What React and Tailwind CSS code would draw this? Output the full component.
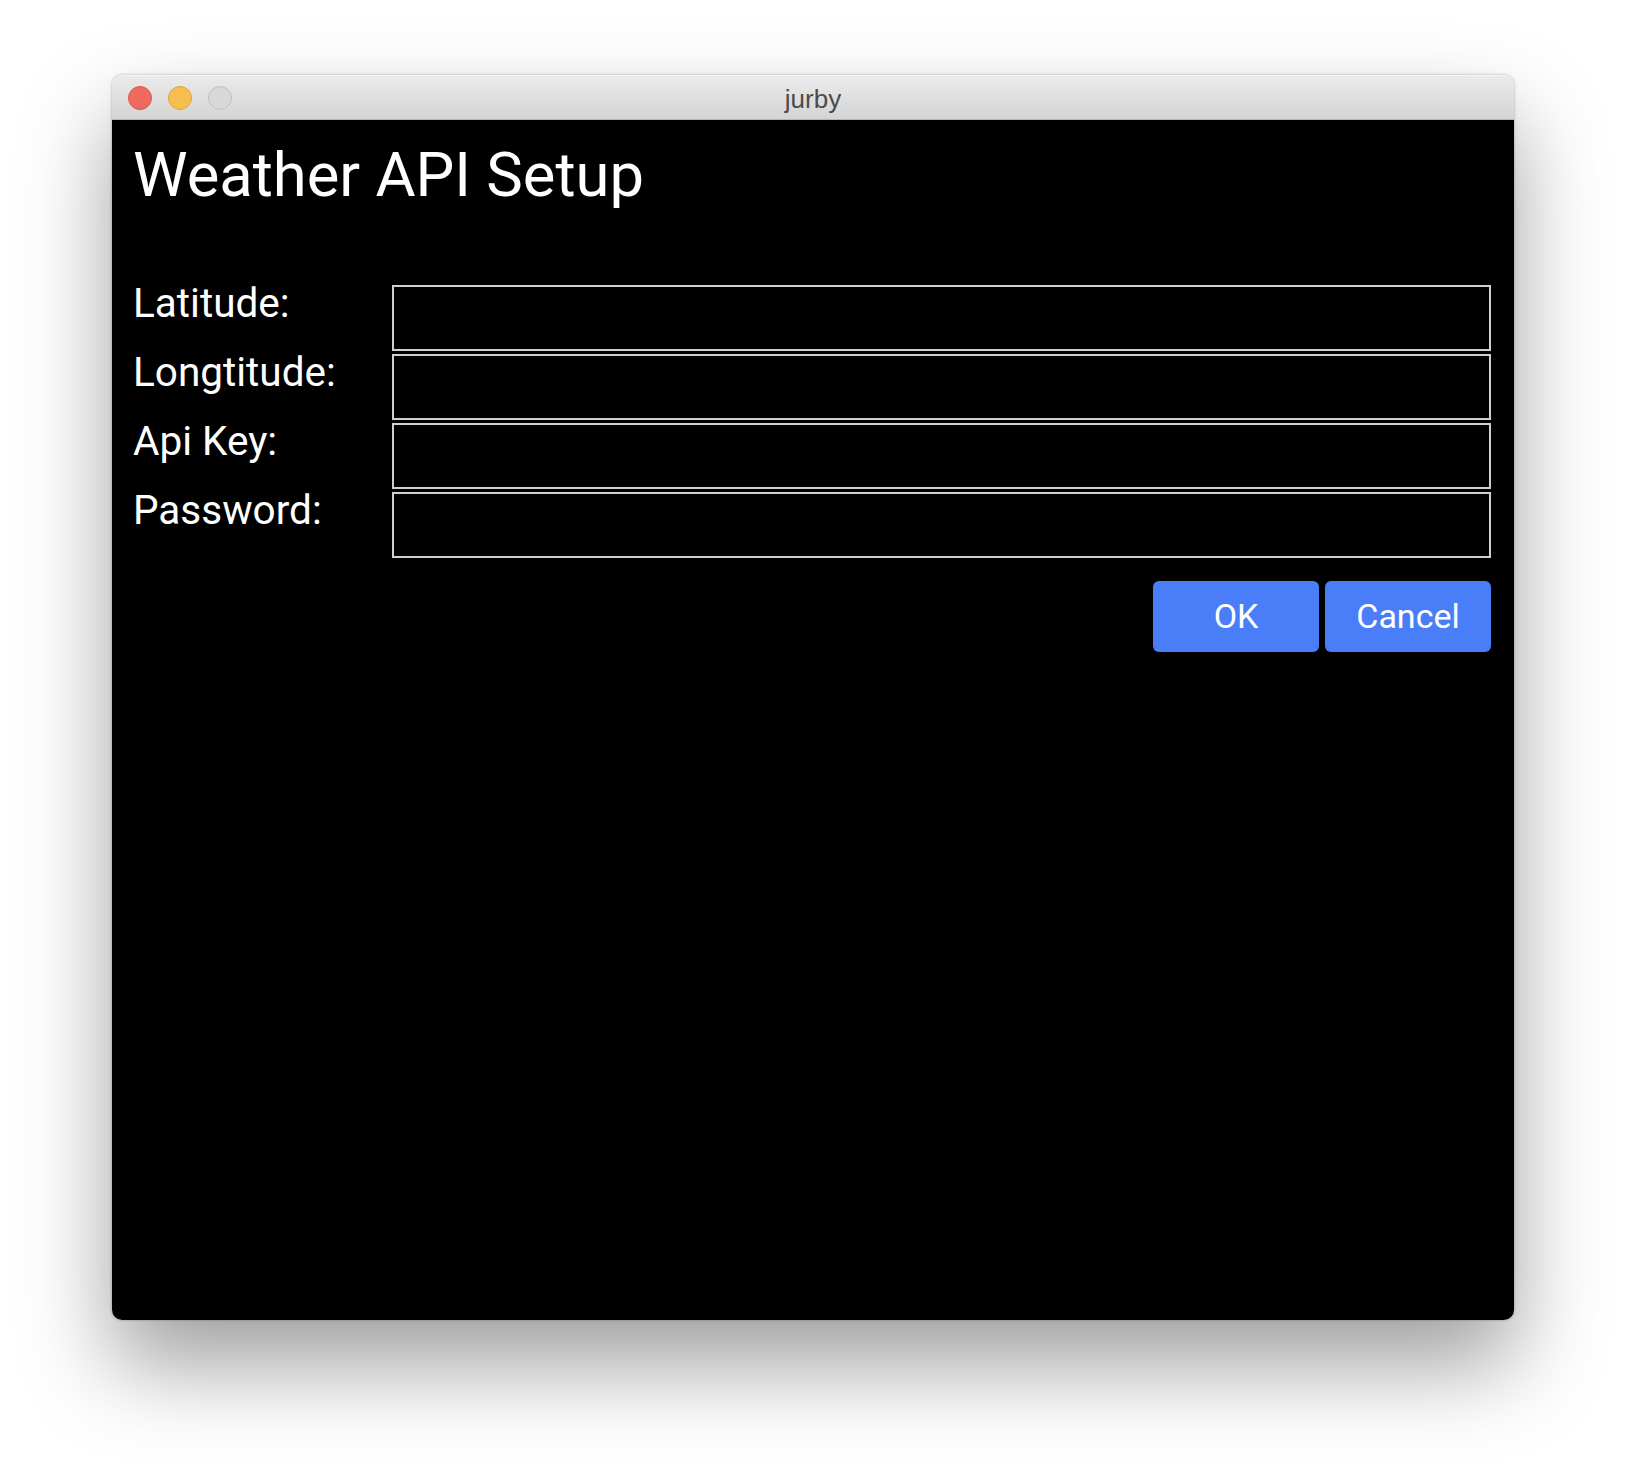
import React from "react";

const fields = ["Latitude:", "Longtitude:", "Api Key:", "Password:"];

function TrafficLights() {
    return (
        <div className="flex items-center gap-[16px] pl-[16px]">
            <span className="w-[24px] h-[24px] rounded-full bg-[#ee6a5f] border border-[#d9574c]" />
            <span className="w-[24px] h-[24px] rounded-full bg-[#f5be4f] border border-[#dca63c]" />
            <span className="w-[24px] h-[24px] rounded-full bg-[#d8d8d8] border border-[#c0c0c0]" />
        </div>
    );
}

export default function App() {
    return (
        <div className="w-full min-h-[1468px] bg-white pt-[75px]" style={{ fontFamily: "Roboto, 'Noto Sans', sans-serif" }}>
            <div className="mx-auto w-[1402px] h-[1245px] flex flex-col rounded-[10px] overflow-hidden shadow-[0_45px_90px_rgba(0,0,0,0.38),0_0_3px_rgba(0,0,0,0.3)]">
                {/* title bar */}
                <div className="relative h-[45px] flex items-center bg-gradient-to-b from-[#ebebeb] to-[#d4d4d4] border-b border-[#b4b4b4] border-t border-t-[#f4f4f4]">
                    <TrafficLights />
                    <p className="absolute inset-0 flex items-center justify-center pt-[3px] text-[26px] text-[#4b4b4b]" style={{ fontFamily: "'Liberation Sans', Arial, sans-serif" }}>
                        jurby
                    </p>
                </div>

                {/* body */}
                <div className="flex-1 bg-black pl-[21px] pr-[23px] pt-[20px]">
                    <h1 className="text-[61.5px] leading-[70px] text-white">Weather API Setup</h1>

                    <div className="flex flex-col gap-[3px] mt-[75px]">
                        {fields.map((label) => (
                            <div key={label} className="flex items-start">
                                <p className="w-[259px] shrink-0 text-[40.5px] leading-[36px] text-white">{label}</p>
                                <input
                                    type={label === "Password:" ? "password" : "text"}
                                    className="flex-1 h-[66px] bg-black border-2 border-[#cfcfcf] outline-none text-white text-[36px] px-2"
                                />
                            </div>
                        ))}
                    </div>

                    <div className="flex justify-end gap-[6px] mt-[23px]">
                        <button className="w-[166px] h-[71px] rounded-[6px] bg-[#4a7ef8] text-white text-[34px]">OK</button>
                        <button className="w-[166px] h-[71px] rounded-[6px] bg-[#4a7ef8] text-white text-[34px]">Cancel</button>
                    </div>
                </div>
            </div>
        </div>
    );
}
